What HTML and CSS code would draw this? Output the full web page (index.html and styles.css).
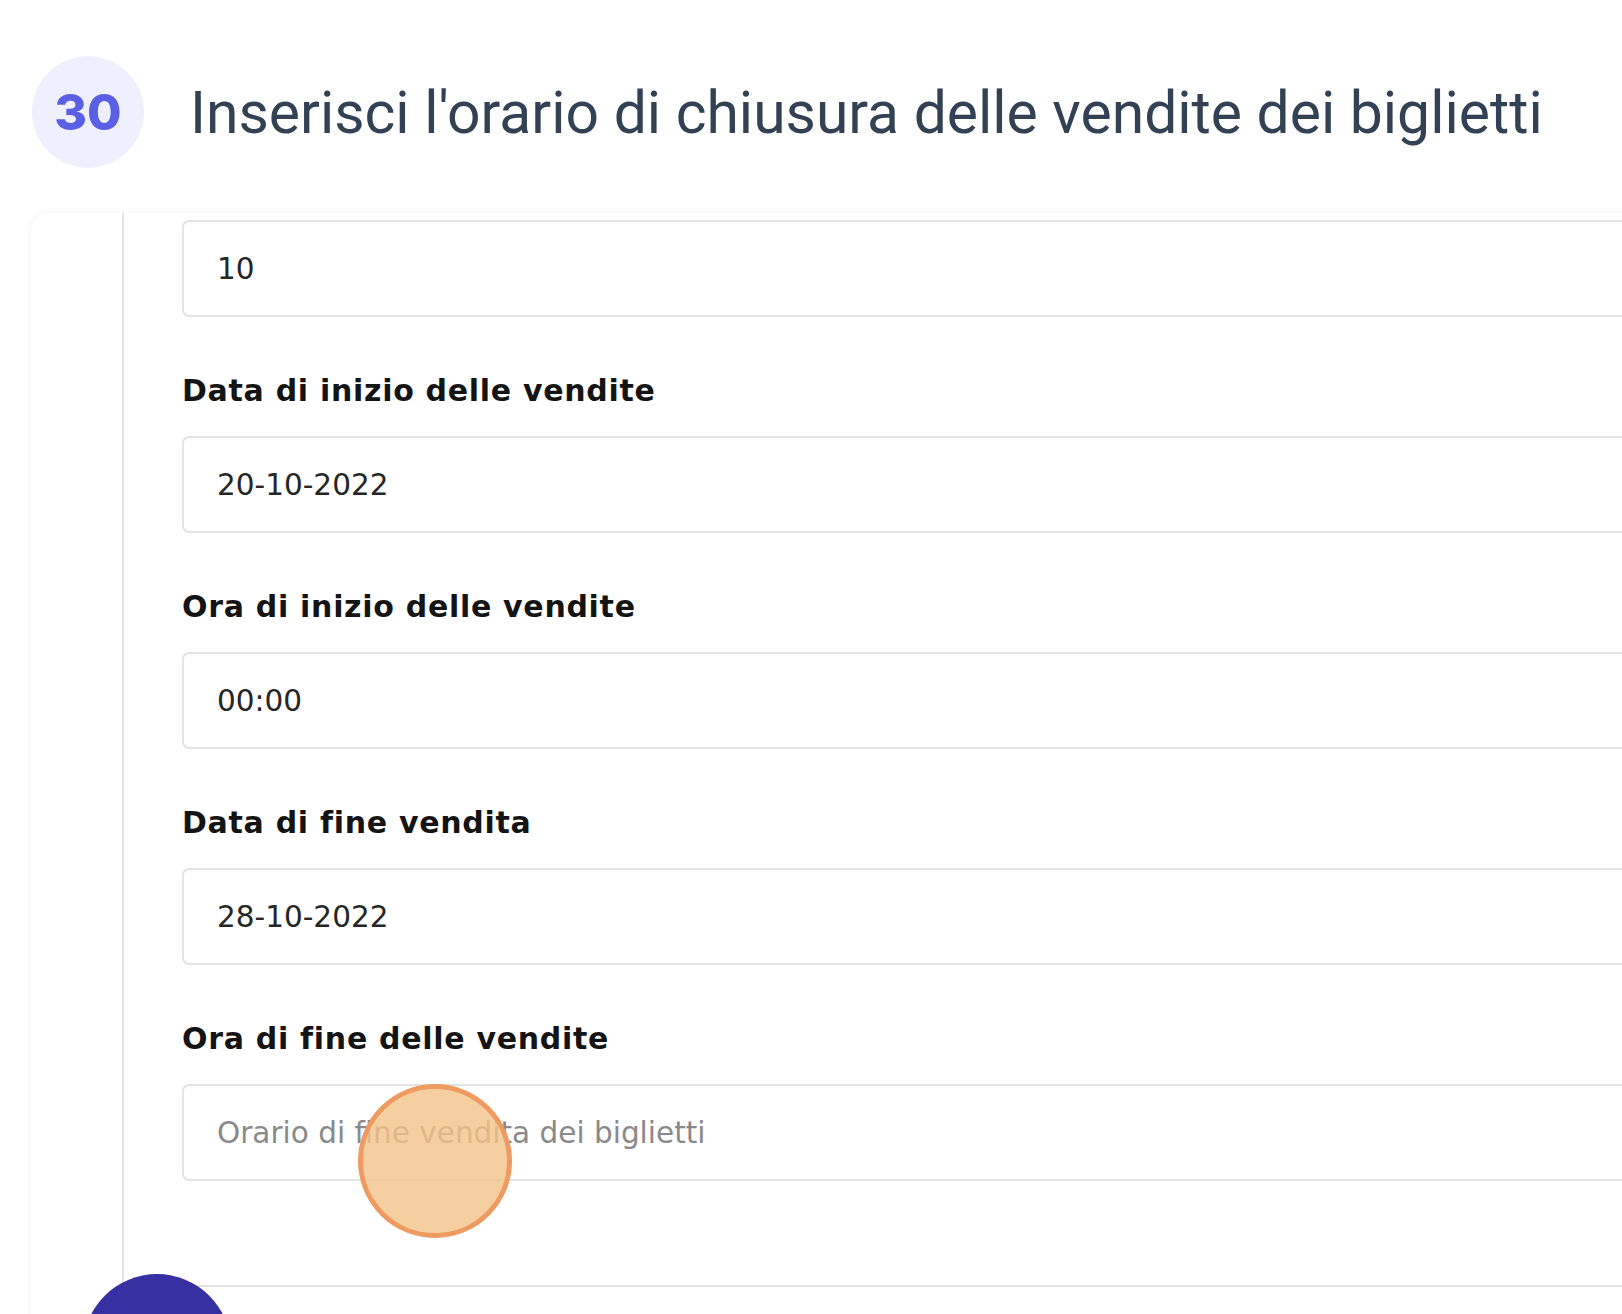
FILE: index.html
```html
<!DOCTYPE html>
<html lang="it">
<head>
  <meta charset="UTF-8" />
  <meta name="viewport" content="width=device-width, initial-scale=1.0"/>
  <title>Passo 30 - Orario di chiusura</title>
  <link rel="stylesheet" href="styles.css">
</head>
<body>

  <header class="step">
    <div class="step-num">30</div>
    <h1 class="step-title">Inserisci l'orario di chiusura delle vendite dei biglietti</h1>
  </header>

  <section class="card">
    <div class="card-rail"></div>
    <form class="card-body">
      <div class="field">
        <input class="input" type="text" value="10" readonly>
      </div>

      <div class="field">
        <label class="label" for="startDate">Data di inizio delle vendite</label>
        <input class="input" type="text" id="startDate" value="20-10-2022" readonly>
      </div>

      <div class="field">
        <label class="label" for="startTime">Ora di inizio delle vendite</label>
        <input class="input" type="text" id="startTime" value="00:00" readonly>
      </div>

      <div class="field">
        <label class="label" for="endDate">Data di fine vendita</label>
        <input class="input" type="text" id="endDate" value="28-10-2022" readonly>
      </div>

      <div class="field">
        <label class="label" for="endTime">Ora di fine delle vendite</label>
        <input class="input" type="text" id="endTime" placeholder="Orario di fine vendita dei biglietti">
      </div>
    </form>
  </section>

  <span class="click-dot"></span>
  <span class="next-step"></span>

</body>
</html>
```

FILE: styles.css
```css
:root {
  --title: #334155;
  --badge-bg: #eef0fe;
  --badge-text: #5a5fe3;
  --label: #141414;
  --value: #262626;
  --placeholder: #8a8a8a;
  --line: #e4e4e4;
  --indigo: #3730a3;
}

html, body {
  overflow: hidden;
}

body {
  margin: 0;
  height: 1314px;
  position: relative;
  background: #ffffff;
  font-family: 'DejaVu Sans', sans-serif;
}

.step {
  display: flex;
  align-items: center;
  gap: 46px;
  padding: 56px 0 0 32px;
}

.step-num {
  flex: none;
  width: 112px;
  height: 112px;
  border-radius: 50%;
  background: var(--badge-bg);
  color: var(--badge-text);
  display: flex;
  align-items: center;
  justify-content: center;
  font-family: 'Inter', sans-serif;
  font-size: 50px;
  font-weight: 800;
}

.step-title {
  margin: 0;
  font-family: 'Roboto', sans-serif;
  font-weight: 400;
  font-size: 58.8px;
  color: var(--title);
  white-space: nowrap;
}

.card {
  display: flex;
  width: 1760px;
  margin: 45px 0 0 31px;
  padding-bottom: 80px;
  background: #ffffff;
  border-radius: 18px 0 0 0;
  box-shadow: 0 0 8px rgba(0, 0, 0, 0.05);
}

.card-rail {
  flex: none;
  width: 91px;
}

.card-body {
  flex: 1;
  padding: 7px 0 104px 58px;
  border-left: 2px solid var(--line);
  border-bottom: 2px solid var(--line);
}

.field + .field {
  margin-top: 54px;
}

.label {
  display: block;
  margin-bottom: 25px;
  line-height: 40px;
  font-size: 30px;
  font-weight: 700;
  letter-spacing: 0.7px;
  color: var(--label);
}

.input {
  display: block;
  box-sizing: border-box;
  width: 100%;
  height: 97px;
  padding: 0 33px;
  border: 2px solid var(--line);
  border-radius: 7px;
  background: #ffffff;
  font-family: 'DejaVu Sans', sans-serif;
  font-size: 29.5px;
  color: var(--value);
  outline: none;
}

.input::placeholder {
  color: var(--placeholder);
}

.click-dot {
  position: absolute;
  left: 358px;
  top: 1084px;
  width: 154px;
  height: 154px;
  box-sizing: border-box;
  border-radius: 50%;
  border: 5px solid #ee9a60;
  background: rgba(244, 195, 136, 0.8);
}

.next-step {
  position: absolute;
  left: 83px;
  top: 1274px;
  width: 148px;
  height: 148px;
  border-radius: 50%;
  background: var(--indigo);
}
```
